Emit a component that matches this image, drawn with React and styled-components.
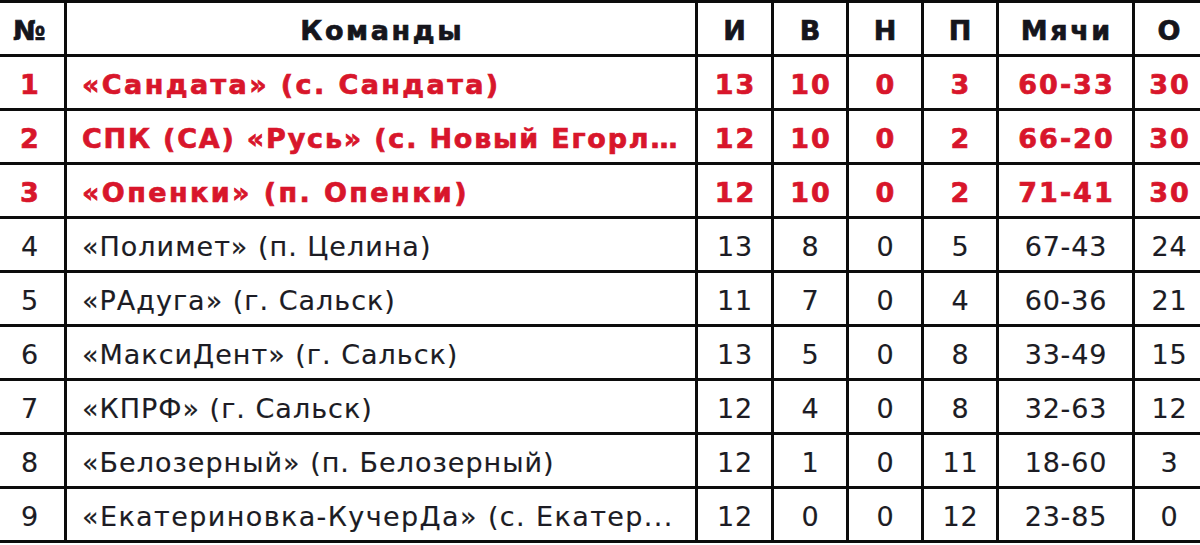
import React from "react";
import styled, { createGlobalStyle } from "styled-components";

const GlobalStyle = createGlobalStyle`
  html, body {
    margin: 0;
    padding: 0;
    background: #ffffff;
    overflow: hidden;
  }
  body {
    font-family: "DejaVu Sans", Tahoma, Verdana, sans-serif;
  }
`;

const Table = styled.table`
  border-collapse: collapse;
  table-layout: fixed;
  width: 1211px;
  margin-left: -8px;
  font-size: 27px;
  color: #1c1c24;
`;

const HeadCell = styled.th`
  height: 48px;
  padding: 3px 0 0;
  border: 3px solid #0c0c0c;
  font-weight: bold;
  letter-spacing: 2.6px;
  text-indent: 2.6px;
  -webkit-text-stroke: 0.7px currentColor;
  text-align: center;
  color: #15151c;
  white-space: nowrap;
  overflow: hidden;
`;

const spacing = (p) => {
  if (p.$leader) return p.$name ? 2.4 - p.$squeeze : 2;
  return p.$name ? 1 - p.$squeeze : 0.8;
};

const Cell = styled.td`
  height: 48px;
  padding: 3px 0 0 ${(p) => (p.$name ? "15px" : "0")};
  border: 3px solid #0c0c0c;
  text-align: ${(p) => (p.$name ? "left" : "center")};
  letter-spacing: ${(p) => spacing(p)}px;
  text-indent: ${(p) => (p.$name ? 0 : spacing(p))}px;
  font-weight: ${(p) => (p.$leader ? "bold" : "normal")};
  -webkit-text-stroke: ${(p) =>
    p.$leader ? "0.7px currentColor" : "0.15px currentColor"};
  color: ${(p) => (p.$leader ? "#d8162b" : "#1c1c24")};
  white-space: nowrap;
  overflow: hidden;
`;

const Row = styled.tr``;

const columns = [72, 631, 76, 75, 75, 75, 136, 71];
const headers = ["№", "Команды", "И", "В", "Н", "П", "Мячи", "О"];

const rows = [
  { squeeze: 0, cells: ["1", "«Сандата» (с. Сандата)", "13", "10", "0", "3", "60-33", "30"] },
  { squeeze: 0.6, cells: ["2", "СПК (СА) «Русь» (с. Новый Егорл…", "12", "10", "0", "2", "66-20", "30"] },
  { squeeze: 0, cells: ["3", "«Опенки» (п. Опенки)", "12", "10", "0", "2", "71-41", "30"] },
  { squeeze: 0, cells: ["4", "«Полимет» (п. Целина)", "13", "8", "0", "5", "67-43", "24"] },
  { squeeze: 0, cells: ["5", "«РАдуга» (г. Сальск)", "11", "7", "0", "4", "60-36", "21"] },
  { squeeze: 0, cells: ["6", "«МаксиДент» (г. Сальск)", "13", "5", "0", "8", "33-49", "15"] },
  { squeeze: 0, cells: ["7", "«КПРФ» (г. Сальск)", "12", "4", "0", "8", "32-63", "12"] },
  { squeeze: 0, cells: ["8", "«Белозерный» (п. Белозерный)", "12", "1", "0", "11", "18-60", "3"] },
  { squeeze: -0.4, cells: ["9", "«Екатериновка-КучерДа» (с. Екатер...", "12", "0", "0", "12", "23-85", "0"] },
];

export default function App() {
  return (
    <>
      <GlobalStyle />
      <Table>
        <colgroup>
          {columns.map((w, i) => (
            <col key={i} style={{ width: w }} />
          ))}
        </colgroup>
        <thead>
          <Row>
            {headers.map((h) => (
              <HeadCell key={h}>{h}</HeadCell>
            ))}
          </Row>
        </thead>
        <tbody>
          {rows.map((r, ri) => (
            <Row key={ri}>
              {r.cells.map((v, ci) => (
                <Cell
                  key={ci}
                  $name={ci === 1}
                  $leader={ri < 3}
                  $squeeze={r.squeeze}
                >
                  {v}
                </Cell>
              ))}
            </Row>
          ))}
        </tbody>
      </Table>
    </>
  );
}
